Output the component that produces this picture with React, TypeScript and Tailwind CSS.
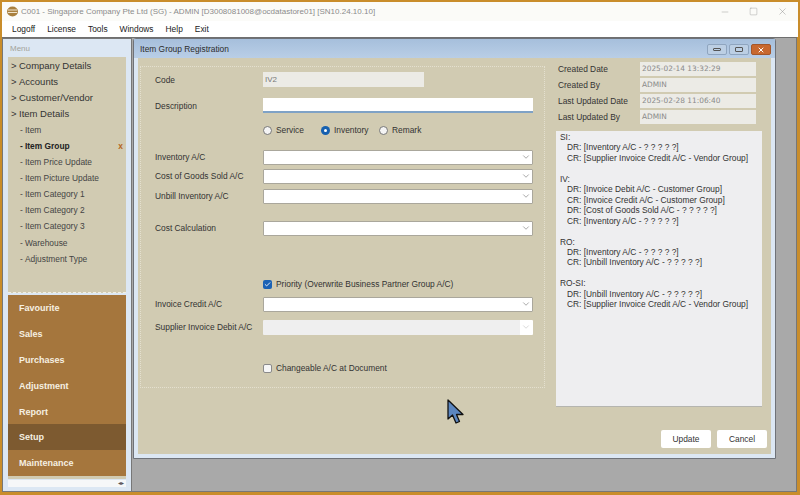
import * as React from "react"
import { ChevronDown, Check, Minus, Square, X } from "lucide-react"

const menuItems = [
  "Company Details",
  "Accounts",
  "Customer/Vendor",
  "Item Details",
]
const subItems = [
  "Item",
  "Item Group",
  "Item Price Update",
  "Item Picture Update",
  "Item Category 1",
  "Item Category 2",
  "Item Category 3",
  "Warehouse",
  "Adjustment Type",
]
const sections = ["Favourite", "Sales", "Purchases", "Adjustment", "Report", "Setup", "Maintenance"]
const infoFields = [
  ["Created Date", "2025-02-14 13:32:29"],
  ["Created By", "ADMIN"],
  ["Last Updated Date", "2025-02-28 11:06:40"],
  ["Last Updated By", "ADMIN"],
]
const notes = `SI:
   DR: [Inventory A/C - ? ? ? ? ?]
   CR: [Supplier Invoice Credit A/C - Vendor Group]

IV:
   DR: [Invoice Debit A/C - Customer Group]
   CR: [Invoice Credit A/C - Customer Group]
   DR: [Cost of Goods Sold A/C - ? ? ? ? ?]
   CR: [Inventory A/C - ? ? ? ? ?]

RO:
   DR: [Inventory A/C - ? ? ? ? ?]
   CR: [Unbill Inventory A/C - ? ? ? ? ?]

RO-SI:
   DR: [Unbill Inventory A/C - ? ? ? ? ?]
   CR: [Supplier Invoice Credit A/C - Vendor Group]`

function Label({ children }: { children: string }) {
  return <span className="w-[108px] shrink-0 pt-[1px] text-[#333]">{children}</span>
}

function Combo({ label, className, disabled }: { label: string; className: string; disabled?: boolean }) {
  return (
    <div className={"flex h-[14px] items-center " + className}>
      <Label>{label}</Label>
      <div
        className={
          "flex h-[15px] w-[270px] items-center justify-end rounded-[1px] pr-[1px] " +
          (disabled
            ? "bg-[#efefef] border-r-[13px] border-white"
            : "bg-white border border-[#aaa79c]")
        }
      >
        <ChevronDown
          size={10}
          strokeWidth={1.5}
          className={disabled ? "text-[#c4c4c4] -mr-[12px]" : "text-[#777]"}
        />
      </div>
    </div>
  )
}

function Radio({ label, checked, className }: { label: string; checked?: boolean; className: string }) {
  return (
    <div className={"flex items-center gap-[4px] " + className}>
      {checked ? (
        <span className="flex h-[9px] w-[9px] items-center justify-center rounded-full bg-[#1560b0]">
          <span className="h-[3px] w-[3px] rounded-full bg-white" />
        </span>
      ) : (
        <span className="h-[9px] w-[9px] rounded-full border border-[#777] bg-[#f4f4f4]" />
      )}
      <span className="text-[#333]">{label}</span>
    </div>
  )
}

function WindowButton({ className, children }: { className: string; children: React.ReactNode }) {
  return (
    <div className={"flex h-[11px] w-[20px] items-center justify-center rounded-[2px] border " + className}>
      {children}
    </div>
  )
}

export default function App() {
  return (
    <div className="relative flex h-[495px] w-[800px] flex-col overflow-hidden bg-[#c98d2b] px-[2px] pt-[2px] pb-[3px] font-['Liberation_Sans',sans-serif] text-[8.4px] leading-none text-[#333]">
      {/* app title bar */}
      <div className="flex h-[19px] shrink-0 items-center bg-[#fbfbf8] pl-[5px]">
        <svg width="11" height="11" viewBox="0 0 11 11" className="mr-[3px]">
          <ellipse cx="5.5" cy="5.5" rx="5.5" ry="5" fill="#a9803e" />
          <path d="M1 4h9M1 6.5h9" stroke="#efe3cb" strokeWidth="1" />
        </svg>
        <span className="text-[8px] text-[#8b8b8b]">
          C001 - Singapore Company Pte Ltd (SG) - ADMIN [D3008081008@ocdatastore01] [SN10.24.10.10]
        </span>
        <div className="ml-auto flex items-center gap-[19px] pr-[10px] text-[#8a8a8a]">
          <Minus size={10} strokeWidth={1} />
          <Square size={9} strokeWidth={1} />
          <X size={11} strokeWidth={1} />
        </div>
      </div>

      {/* menu bar */}
      <div className="flex h-[16px] shrink-0 items-center gap-[12px] bg-white pl-[10px] text-[#222]">
        {["Logoff", "License", "Tools", "Windows", "Help", "Exit"].map((m) => (
          <span key={m}>{m}</span>
        ))}
      </div>

      <div className="mr-[1px] flex min-h-0 flex-1 border-t border-[#6f6f6f]">
        {/* side panel */}
        <div className="flex w-[130px] shrink-0 flex-col border border-[#777] bg-[#dce7f3] px-[5px] pt-[1px]">
          <div className="flex h-[17px] items-center pl-[2px] text-[8px] text-[#a3a39a]">Menu</div>
          <div className="flex h-[236px] flex-col border-b border-dashed border-[#f2efe2] bg-[#d1cbb2] pt-[1px]">
            {menuItems.map((m) => (
              <div key={m} className="flex h-[16px] items-center text-[9.5px] text-[#333]">
                <span className="ml-[3px] w-[8px]">&gt;</span>
                {m}
              </div>
            ))}
            {subItems.map((m) => {
              const active = m === "Item Group"
              return (
                <div key={m} className={"flex h-[16.1px] items-center pl-[12px] " + (active ? "font-bold text-[#222]" : "text-[#444]")}>
                  <span className="w-[5px]">-</span>
                  {m}
                  {active && <span className="ml-auto mr-[3px] font-bold text-[#b5651d]">x</span>}
                </div>
              )
            })}
          </div>
          <div className="mt-[2px] flex flex-col bg-[#a5763d]">
            {sections.map((s) => (
              <div
                key={s}
                className={"flex h-[25.8px] items-center pt-[2px] pl-[11px] text-[9px] font-bold text-[#f6f0e2] " + (s === "Setup" ? "bg-[#7d5a30]" : "")}
              >
                {s}
              </div>
            ))}
          </div>
          <div className="h-[3px] bg-[#d1cbb2]" />
          <div className="mt-[1px] flex h-[7px] items-center justify-end bg-[#f6f7f8] pr-[2px] text-[6px] text-[#555]">◂▸</div>
        </div>

        {/* mdi area */}
        <div className="min-w-0 flex-1 border-r border-b border-[#777] bg-[#a9a9a9] pl-[1px]">
          <div className="flex h-[421px] w-[643px] flex-col rounded-t-[3px] border border-[#6f7278] bg-[#dce7f3] px-[4px] pb-[4px]">
            <div className="-mx-[4px] flex h-[19px] shrink-0 items-center justify-between bg-gradient-to-b from-[#a6bfdc] to-[#b9cee6] pt-[2px] pr-[4px] pl-[6px]">
              <span className="text-[#2c2c2c]">Item Group Registration</span>
              <div className="flex gap-[2px]">
                <WindowButton className="border-[#8fa5bf] bg-[#bccfe4]">
                  <span className="h-[3px] w-[8px] rounded-[1px] border border-[#555]" />
                </WindowButton>
                <WindowButton className="border-[#8fa5bf] bg-[#bccfe4]">
                  <span className="h-[5px] w-[8px] rounded-[1px] border border-[#555]" />
                </WindowButton>
                <WindowButton className="border-[#a4562a] bg-[#c8682f]">
                  <X size={8} strokeWidth={3} className="text-white" />
                </WindowButton>
              </div>
            </div>

            <div className="flex min-h-0 flex-1 flex-col bg-[#d1cbb2]">
              <div className="flex flex-1">
                {/* form */}
                <div className="w-[418px] shrink-0 pt-[8px] pl-[2px]">
                  <div className="h-[322px] w-[405px] border border-dotted border-[#e4e0cf] pl-[14px]">
                    <div className="mt-[5px] flex h-[15px] items-center">
                      <Label>Code</Label>
                      <div className="flex h-[15px] w-[161px] items-center bg-[#ecebe6] pl-[2px] text-[8px] text-[#777]">IV2</div>
                    </div>
                    <div className="mt-[11px] flex h-[15px] items-center">
                      <Label>Description</Label>
                      <div className="h-[15px] w-[270px] border-b-2 border-[#7fa2c6] bg-white" />
                    </div>
                    <div className="mt-[10px] flex h-[14px] items-center pl-[108px]">
                      <Radio label="Service" className="w-[58px]" />
                      <Radio label="Inventory" checked className="w-[58px]" />
                      <Radio label="Remark" className="" />
                    </div>
                    <Combo label="Inventory A/C" className="mt-[13px]" />
                    <Combo label="Cost of Goods Sold A/C" className="mt-[5px]" />
                    <Combo label="Unbill Inventory A/C" className="mt-[6px]" />
                    <Combo label="Cost Calculation" className="mt-[18px]" />
                    <div className="mt-[42px] flex h-[14px] items-center gap-[4px] pl-[108px]">
                      <span className="flex h-[9px] w-[9px] items-center justify-center rounded-[2px] bg-[#1b62b5]">
                        <Check size={7} strokeWidth={3} className="text-white" />
                      </span>
                      <span>Priority (Overwrite Business Partner Group A/C)</span>
                    </div>
                    <Combo label="Invoice Credit A/C" className="mt-[6px]" />
                    <Combo label="Supplier Invoice Debit A/C" className="mt-[9px]" disabled />
                    <div className="mt-[27px] flex h-[14px] items-center gap-[4px] pl-[108px]">
                      <span className="h-[9px] w-[9px] rounded-[2px] border border-[#8a8a8a] bg-[#f6f6f6]" />
                      <span>Changeable A/C at Document</span>
                    </div>
                  </div>
                </div>

                {/* info column */}
                <div className="flex flex-1 flex-col pt-[4px]">
                  {infoFields.map(([label, value]) => (
                    <div key={label} className="mb-[2px] flex h-[14px] items-center pl-[2px]">
                      <span className="w-[82px] shrink-0">{label}</span>
                      <span className="flex h-[14px] w-[116px] items-center bg-[#ecebe6] pl-[2px] font-['DejaVu_Sans',sans-serif] text-[7.4px] text-[#8a8a8a]">
                        {value}
                      </span>
                    </div>
                  ))}
                  <pre className="mt-[5px] h-[276px] w-[206px] whitespace-pre-wrap border-b border-[#b5b5b0] bg-[#eeeef0] pt-[1px] pl-[4px] font-['Liberation_Sans',sans-serif] text-[8.4px] leading-[10.45px] text-[#333]">
                    {notes}
                  </pre>
                </div>
              </div>
              <div className="flex justify-end gap-[6px] pr-[4px] pb-[6px]">
                <button className="h-[18px] w-[50px] rounded-[2px] bg-white text-[#333]">Update</button>
                <button className="h-[18px] w-[50px] rounded-[2px] bg-white text-[#333]">Cancel</button>
              </div>
            </div>
          </div>
        </div>
      </div>

      {/* mouse pointer */}
      <svg width="19" height="26" viewBox="0 0 19 26" className="absolute top-[399px] left-[447px]">
        <path d="M1 1V20L5.5 16L9 24L12.5 22.5L9.5 15.5H16Z" fill="#5b86c0" stroke="#111" strokeWidth="1.3" strokeLinejoin="round" />
      </svg>
    </div>
  )
}
